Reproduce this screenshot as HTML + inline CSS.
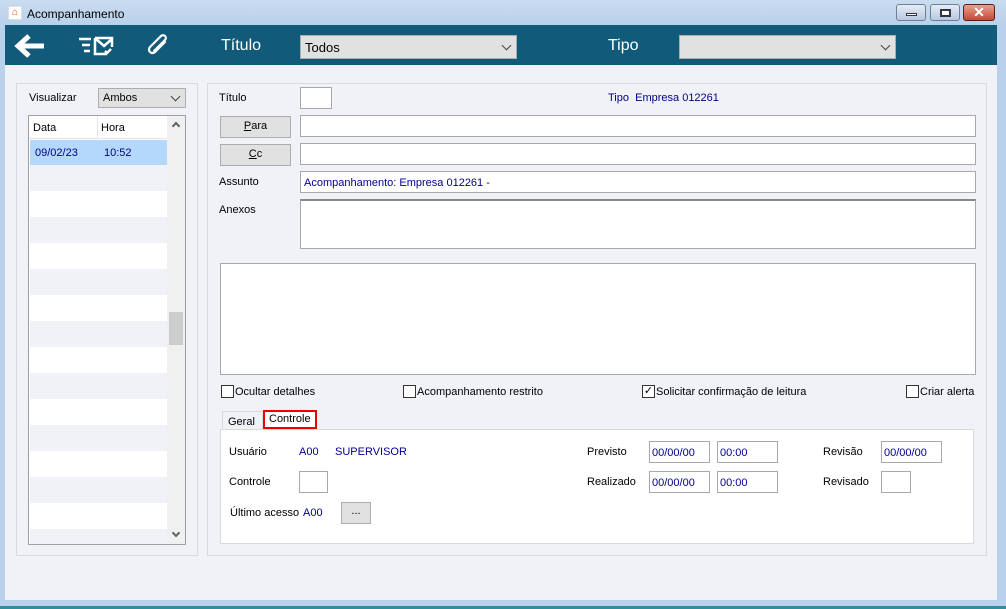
<!DOCTYPE html>
<html><head><meta charset="utf-8"><style>
*{box-sizing:border-box;margin:0;padding:0}
body{width:1006px;height:609px;background:#b9d1ea;font-family:"Liberation Sans",sans-serif;font-size:11px;color:#000;position:relative;overflow:hidden}
.a{position:absolute}
.in{position:absolute;background:#fff;border:1px solid #a9a9a9}
.btn{position:absolute;background:#e1e1e1;border:1px solid #adadad;text-align:center;line-height:19px}
.blue{color:#00008b}
.cb{position:absolute;width:13px;height:13px;border:1px solid #333;background:#fff}
.sel{position:absolute;background:#e1e1e1;border:1px solid #adadad}
.chev{position:absolute;right:6px;top:5px;width:7px;height:7px;border-right:1px solid #444;border-bottom:1px solid #444;transform:rotate(45deg)}
</style></head><body>
<div class="a" style="left:0;top:0;width:1006px;height:25px;background:linear-gradient(#c9dcf0,#b9d1ea)"></div>
<div class="a" style="left:8px;top:6px;width:14px;height:14px;background:#fff;border:1px solid #ddd;color:#e8501a;font-size:10px;line-height:12px;text-align:center;font-weight:bold">⌂</div>
<div class="a" style="left:27px;top:7px;font-size:12px">Acompanhamento</div>
<div class="a" style="left:896px;top:4px;width:30px;height:17px;border:1px solid #6f7f95;border-radius:3px;background:linear-gradient(#e4ecf6,#b7c8de)"><div class="a" style="left:9px;top:8px;width:11px;height:3px;background:#fff;border:1px solid #334"></div></div>
<div class="a" style="left:930px;top:4px;width:30px;height:17px;border:1px solid #6f7f95;border-radius:3px;background:linear-gradient(#e4ecf6,#b7c8de)"><div class="a" style="left:9px;top:4px;width:11px;height:8px;background:#fff;border:2px solid #334"></div></div>
<div class="a" style="left:963px;top:4px;width:32px;height:17px;border:1px solid #5a1e1e;border-radius:3px;background:linear-gradient(#e8a08f,#c24a36);color:#fff;font-weight:bold;text-align:center;line-height:15px;font-size:14px">✕</div>
<div class="a" style="left:5px;top:25px;width:992px;height:40px;background:#125a7a"></div>
<svg class="a" style="left:14px;top:34px" width="32" height="24" viewBox="0 0 32 24"><path d="M30 12H6M15 2L4 12l11 10" stroke="#fff" stroke-width="5" fill="none"/></svg>
<svg class="a" style="left:78px;top:36px" width="38" height="20" viewBox="0 0 38 20"><path d="M1 3h12M4 9h8M6 15h6" stroke="#fff" stroke-width="2.5"/><path d="M17 2h17v9M17 2v16h12M18 3l8 7 8-7M33 13l-4 4 -2-2" stroke="#fff" stroke-width="2.5" fill="none"/></svg>
<svg class="a" style="left:145px;top:33px" width="26" height="26" viewBox="0 0 26 26"><path d="M20 9L10 19a3 3 0 01-5-5L16 3a2.5 2.5 0 014 4L9 18" stroke="#fff" stroke-width="2.2" fill="none" stroke-linecap="round"/></svg>
<div class="a" style="left:221px;top:37px;color:#fff;font-size:16px">Título</div>
<div class="sel" style="left:300px;top:35px;width:217px;height:24px;font-size:13px;padding:4px 4px">Todos<div class="chev" style="top:6px"></div></div>
<div class="a" style="left:608px;top:37px;color:#fff;font-size:16px">Tipo</div>
<div class="sel" style="left:679px;top:35px;width:217px;height:24px"><div class="chev" style="top:6px"></div></div>
<div class="a" style="left:5px;top:65px;width:992px;height:535px;background:#f1f2f7"></div>
<div class="a" style="left:16px;top:83px;width:182px;height:473px;border:1px solid #dadada"></div>
<div class="a" style="left:207px;top:83px;width:780px;height:473px;border:1px solid #dadada"></div>
<div class="a" style="left:29px;top:92px">Visualizar</div>
<div class="sel" style="left:98px;top:88px;width:88px;height:20px;padding:3px 4px">Ambos<div class="chev" style="top:4px"></div></div>
<div class="a" style="left:28px;top:115px;width:158px;height:430px;border:1px solid #a0a0a0;background:#fff;overflow:hidden">
 <div class="a" style="left:0;top:0;width:138px;height:23px;background:#fff;border-bottom:1px solid #e5e5e5"><span class="a" style="left:4px;top:6px">Data</span><div class="a" style="left:68px;top:0;width:1px;height:23px;background:#e5e5e5"></div><span class="a" style="left:72px;top:6px">Hora</span></div>
 <div class="a" style="left:1px;top:24px;width:137px;height:25px;background:#b4d8fb"><span class="a blue" style="left:5px;top:7px">09/02/23</span><span class="a blue" style="left:74px;top:7px">10:52</span></div>
 <div class="a" style="left:1px;top:49px;width:137px;height:380px;background:repeating-linear-gradient(#f1f2f7 0 26px,#fff 26px 52px)"></div>
 <div class="a" style="left:138px;top:0;width:18px;height:430px;background:#f0f0f0"></div>
 <div class="a" style="left:140px;top:196px;width:14px;height:33px;background:#cdcdcd"></div>
 <div class="a" style="left:144px;top:7px;width:6px;height:6px;border-left:2px solid #606060;border-top:2px solid #606060;transform:rotate(45deg)"></div>
 <div class="a" style="left:144px;top:414px;width:6px;height:6px;border-right:2px solid #606060;border-bottom:2px solid #606060;transform:rotate(45deg)"></div>
</div>
<div class="a" style="left:219px;top:92px">Título</div>
<div class="in" style="left:300px;top:87px;width:32px;height:22px"></div>
<div class="a" style="left:608px;top:92px"><span class="blue">Tipo</span>&nbsp;&nbsp;<span class="blue">Empresa 012261</span></div>
<div class="btn" style="left:220px;top:116px;width:71px;height:22px"><u>P</u>ara</div>
<div class="in" style="left:300px;top:115px;width:676px;height:22px"></div>
<div class="btn" style="left:220px;top:144px;width:71px;height:22px"><u>C</u>c</div>
<div class="in" style="left:300px;top:143px;width:676px;height:22px"></div>
<div class="a" style="left:219px;top:176px">Assunto</div>
<div class="in" style="left:300px;top:171px;width:676px;height:22px;padding:5px 3px" ><span class="blue">Acompanhamento: Empresa 012261 -</span></div>
<div class="a" style="left:219px;top:204px">Anexos</div>
<div class="in" style="left:300px;top:199px;width:676px;height:50px;border-top:2px solid #888"></div>
<div class="in" style="left:220px;top:263px;width:756px;height:112px"></div>
<div class="cb" style="left:221px;top:385px"></div><div class="a" style="left:235px;top:386px">Ocultar detalhes</div>
<div class="cb" style="left:403px;top:385px"></div><div class="a" style="left:417px;top:386px">Acompanhamento restrito</div>
<div class="cb" style="left:642px;top:385px;font-size:11px;line-height:11px;text-align:center">✓</div><div class="a" style="left:656px;top:386px">Solicitar confirmação de leitura</div>
<div class="cb" style="left:906px;top:385px"></div><div class="a" style="left:920px;top:386px">Criar alerta</div>
<div class="a" style="left:222px;top:411px;width:41px;height:19px;border:1px solid #d9d9d9;border-bottom:none;padding:4px 5px">Geral</div>
<div class="a" style="left:263px;top:410px;width:54px;height:19px;border:2px solid #e00;background:#fff;padding:1px 4px">Controle</div>
<div class="a" style="left:220px;top:429px;width:754px;height:115px;background:#fff;border:1px solid #d9d9d9"></div>
<div class="a" style="left:229px;top:446px">Usuário</div>
<div class="a blue" style="left:299px;top:446px">A00</div>
<div class="a blue" style="left:335px;top:446px">SUPERVISOR</div>
<div class="a" style="left:229px;top:476px">Controle</div>
<div class="in" style="left:299px;top:471px;width:29px;height:22px"></div>
<div class="a" style="left:230px;top:507px">Último acesso</div>
<div class="a blue" style="left:303px;top:507px">A00</div>
<div class="btn" style="left:341px;top:502px;width:30px;height:22px;line-height:16px">...</div>
<div class="a" style="left:587px;top:446px">Previsto</div>
<div class="in blue" style="left:649px;top:441px;width:61px;height:22px;padding:5px 2px">00/00/00</div>
<div class="in blue" style="left:717px;top:441px;width:61px;height:22px;padding:5px 2px">00:00</div>
<div class="a" style="left:587px;top:476px">Realizado</div>
<div class="in blue" style="left:649px;top:471px;width:61px;height:22px;padding:5px 2px">00/00/00</div>
<div class="in blue" style="left:717px;top:471px;width:61px;height:22px;padding:5px 2px">00:00</div>
<div class="a" style="left:823px;top:446px">Revisão</div>
<div class="in blue" style="left:881px;top:441px;width:61px;height:22px;padding:5px 2px">00/00/00</div>
<div class="a" style="left:823px;top:476px">Revisado</div>
<div class="in" style="left:881px;top:471px;width:30px;height:22px"></div>
<div class="a" style="left:0;top:606px;width:1006px;height:3px;background:#2f8f9a"></div>
</body></html>
